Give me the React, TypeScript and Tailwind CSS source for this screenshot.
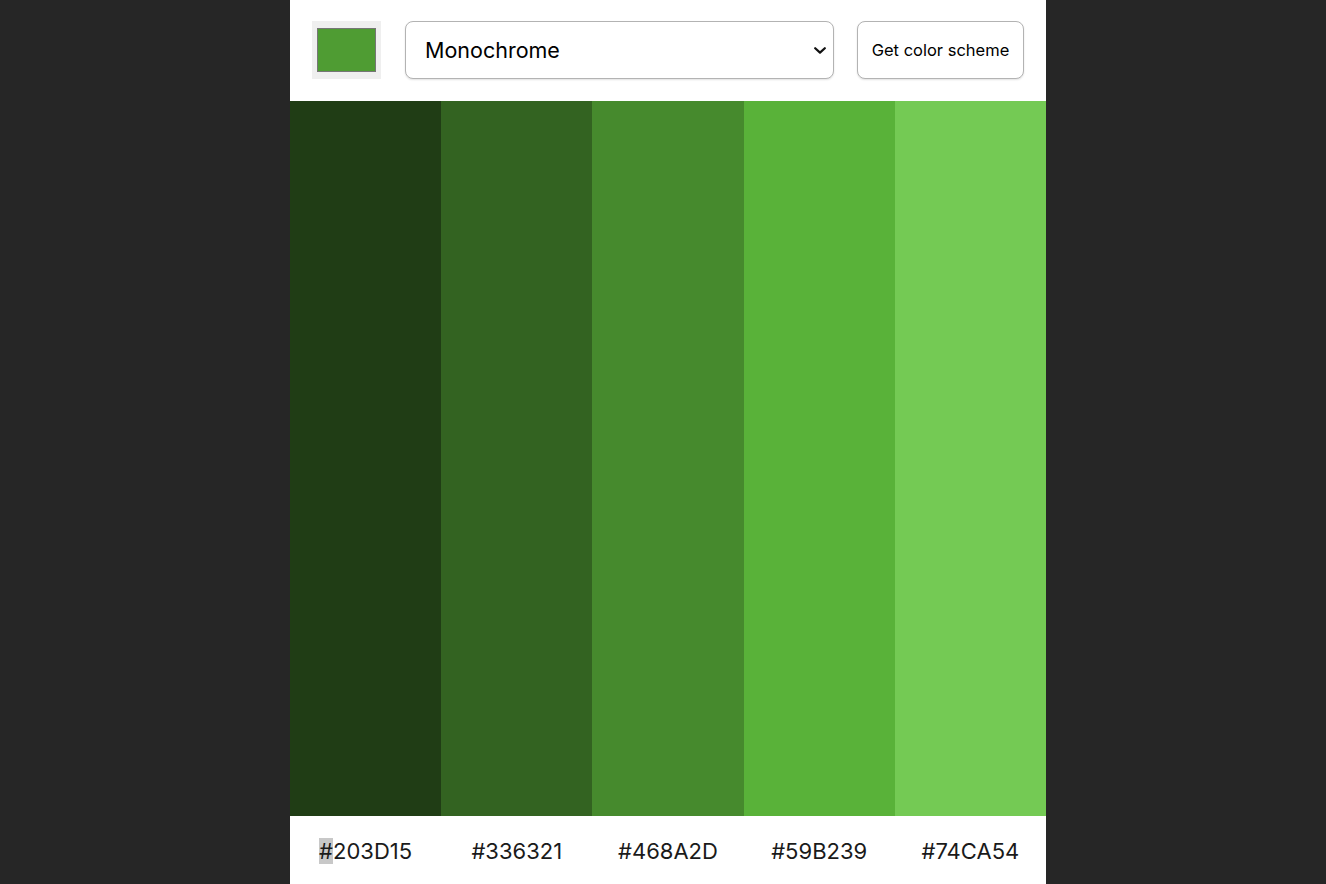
import { useState } from 'react';

const colors = ['#203D15', '#336321', '#468A2D', '#59B239', '#74CA54'];

export default function App() {
  const [mode, setMode] = useState('monochrome');

  return (
    <div className="min-h-screen bg-[#262626] flex justify-center pl-[10px]" style={{ fontFamily: 'Inter, "Noto Sans", sans-serif' }}>
      <div className="w-[756px] h-[884px] bg-white flex flex-col">
        {/* Header */}
        <div className="h-[101px] flex items-start pt-[21px] pl-[22px] pr-[22px]">
          <div className="w-[69px] h-[58px] bg-[#efefef] px-[5px] py-[7px] shrink-0">
            <div className="w-full h-full bg-[#4f9c33] border border-[#767676]" />
          </div>
          <div className="relative ml-[24px] w-[429px] h-[58px]">
            <select
              value={mode}
              onChange={e => setMode(e.target.value)}
              className="appearance-none w-full h-full rounded-lg border border-[#b3b3b3] bg-white pl-[19px] pr-[32px] text-[21.5px] text-black shadow-[0_1px_2px_rgba(0,0,0,0.12)]"
            >
              <option value="monochrome">Monochrome</option>
              <option value="monochrome-dark">Monochrome Dark</option>
              <option value="monochrome-light">Monochrome Light</option>
              <option value="analogic">Analogic</option>
              <option value="complement">Complement</option>
            </select>
            <svg
              className="absolute right-[8px] top-[26px] pointer-events-none"
              width="12"
              height="7"
              viewBox="0 0 12 7"
              fill="none"
            >
              <path d="M1.2 1.2 L6 5.6 L10.8 1.2" stroke="#111" strokeWidth="2.2" strokeLinecap="round" strokeLinejoin="round" />
            </svg>
          </div>
          <button className="ml-[23px] w-[167px] h-[58px] rounded-lg border border-[#b3b3b3] bg-white text-[16.5px] text-black shadow-[0_1px_2px_rgba(0,0,0,0.12)]">
            Get color scheme
          </button>
        </div>

        {/* Colours */}
        <div className="flex-1 grid grid-cols-5">
          {colors.map(c => (
            <div key={c} style={{ backgroundColor: c }} />
          ))}
        </div>

        {/* Hex values */}
        <div className="h-[68px] grid grid-cols-5 items-center">
          {colors.map((c, i) => (
            <div key={c} className="text-center text-[22px] text-[#1a1a1a] pt-[3px]">
              {i === 0 ? (
                <>
                  <span className="bg-[#c8c8c8]">#</span>
                  {c.slice(1)}
                </>
              ) : (
                c
              )}
            </div>
          ))}
        </div>
      </div>
    </div>
  );
}
